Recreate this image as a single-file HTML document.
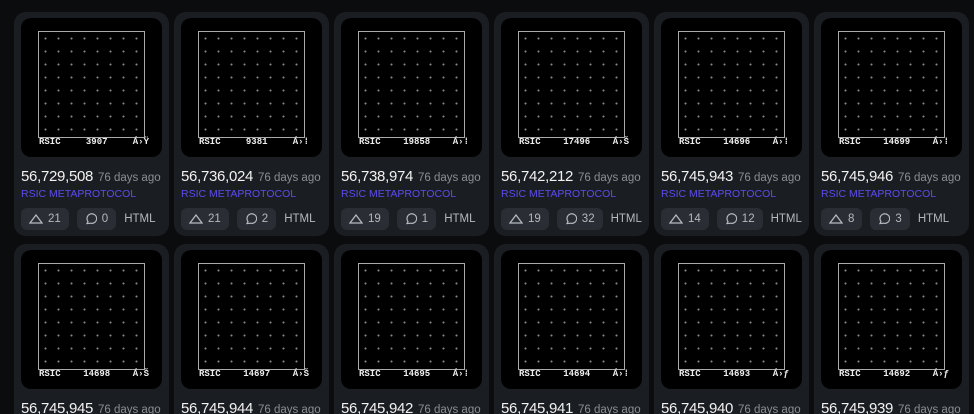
<!DOCTYPE html>
<html><head><style>
*{margin:0;padding:0;box-sizing:border-box}
html,body{width:974px;height:414px;overflow:hidden}
body{background:#0b0c0e;position:relative;font-family:"Liberation Sans",sans-serif}
.card{position:absolute;width:155px;height:224px;background:#1a1d21;border-radius:12px;overflow:hidden}
.img{position:absolute;left:7px;top:6px;width:141px;height:139px;background:#000;border-radius:10px}
.fr{position:absolute;left:17px;top:13px;width:107px;height:107px;border:1px solid #aaa;
background-image:radial-gradient(circle,#888 0.8px,transparent 1.2px);background-size:13px 13px;background-position:0 0}
.lb{position:absolute;left:18px;top:119px;width:110px;font:bold 9px "Liberation Mono",monospace;color:#eee;display:flex;justify-content:space-between}
.num{position:absolute;left:7px;top:156px;font-size:15px;color:#f2f2f2;white-space:nowrap;font-weight:500;letter-spacing:-0.3px}
.num span{font-size:11.5px;color:#8b8f96;margin-left:1px;font-weight:normal;letter-spacing:0}
.meta{position:absolute;left:7px;top:176px;font-size:10.5px;color:#5b4cf0}
.btns{position:absolute;left:7px;top:196px;display:flex;gap:8px;align-items:center}
.b{height:22px;background:#2a2e34;border-radius:6px;color:#b5b9bf;font-size:11.5px;display:flex;align-items:center;padding:0 8px;gap:5px}
.h{color:#b5b9bf;font-size:11.5px}
</style></head><body>
<div id="c"></div>
<script>
const r1=[["56,729,508","3907","Á›Ÿ","21","0"],["56,736,024","9381","Á›⁞","21","2"],["56,738,974","19858","Á›⁞","19","1"],["56,742,212","17496","Á›Š","19","32"],["56,745,943","14696","Á›⁞","14","12"],["56,745,946","14699","Á›⁞","8","3"]];
const r2=[["56,745,945","14698","Á›Š"],["56,745,944","14697","Á›Š"],["56,745,942","14695","Á›⁞"],["56,745,941","14694","Á›⁞"],["56,745,940","14693","Á›ƒ"],["56,745,939","14692","Á›ƒ"]];
let h="";
const tri='<svg width="14" height="10" viewBox="0 0 14 10"><path d="M1 9L7 1L13 9Z" fill="none" stroke="#b5b9bf" stroke-width="1.3"/></svg>';
const bub='<svg width="12" height="12" viewBox="0 0 12 12"><path d="M2 10.5L3 8.5A4.8 4.8 0 1 1 5.5 10.2Z" fill="none" stroke="#b5b9bf" stroke-width="1.2"/></svg>';
r1.forEach((d,i)=>{h+=`<div class="card" style="left:${14+160*i}px;top:12px"><div class="img"><div class="fr"></div><div class="lb"><span>RSIC</span><span>${d[1]}</span><span>${d[2]}</span></div></div><div class="num">${d[0]} <span>76 days ago</span></div><div class="meta">RSIC METAPROTOCOL</div><div class="btns"><div class="b">${tri}${d[3]}</div><div class="b">${bub}${d[4]}</div><div class="h">HTML</div></div></div>`});
r2.forEach((d,i)=>{h+=`<div class="card" style="left:${14+160*i}px;top:244px;height:170px;border-radius:12px 12px 0 0"><div class="img"><div class="fr"></div><div class="lb"><span>RSIC</span><span>${d[1]}</span><span>${d[2]}</span></div></div><div class="num">${d[0]} <span>76 days ago</span></div></div>`});
document.getElementById("c").innerHTML=h;
</script>
</body></html>
